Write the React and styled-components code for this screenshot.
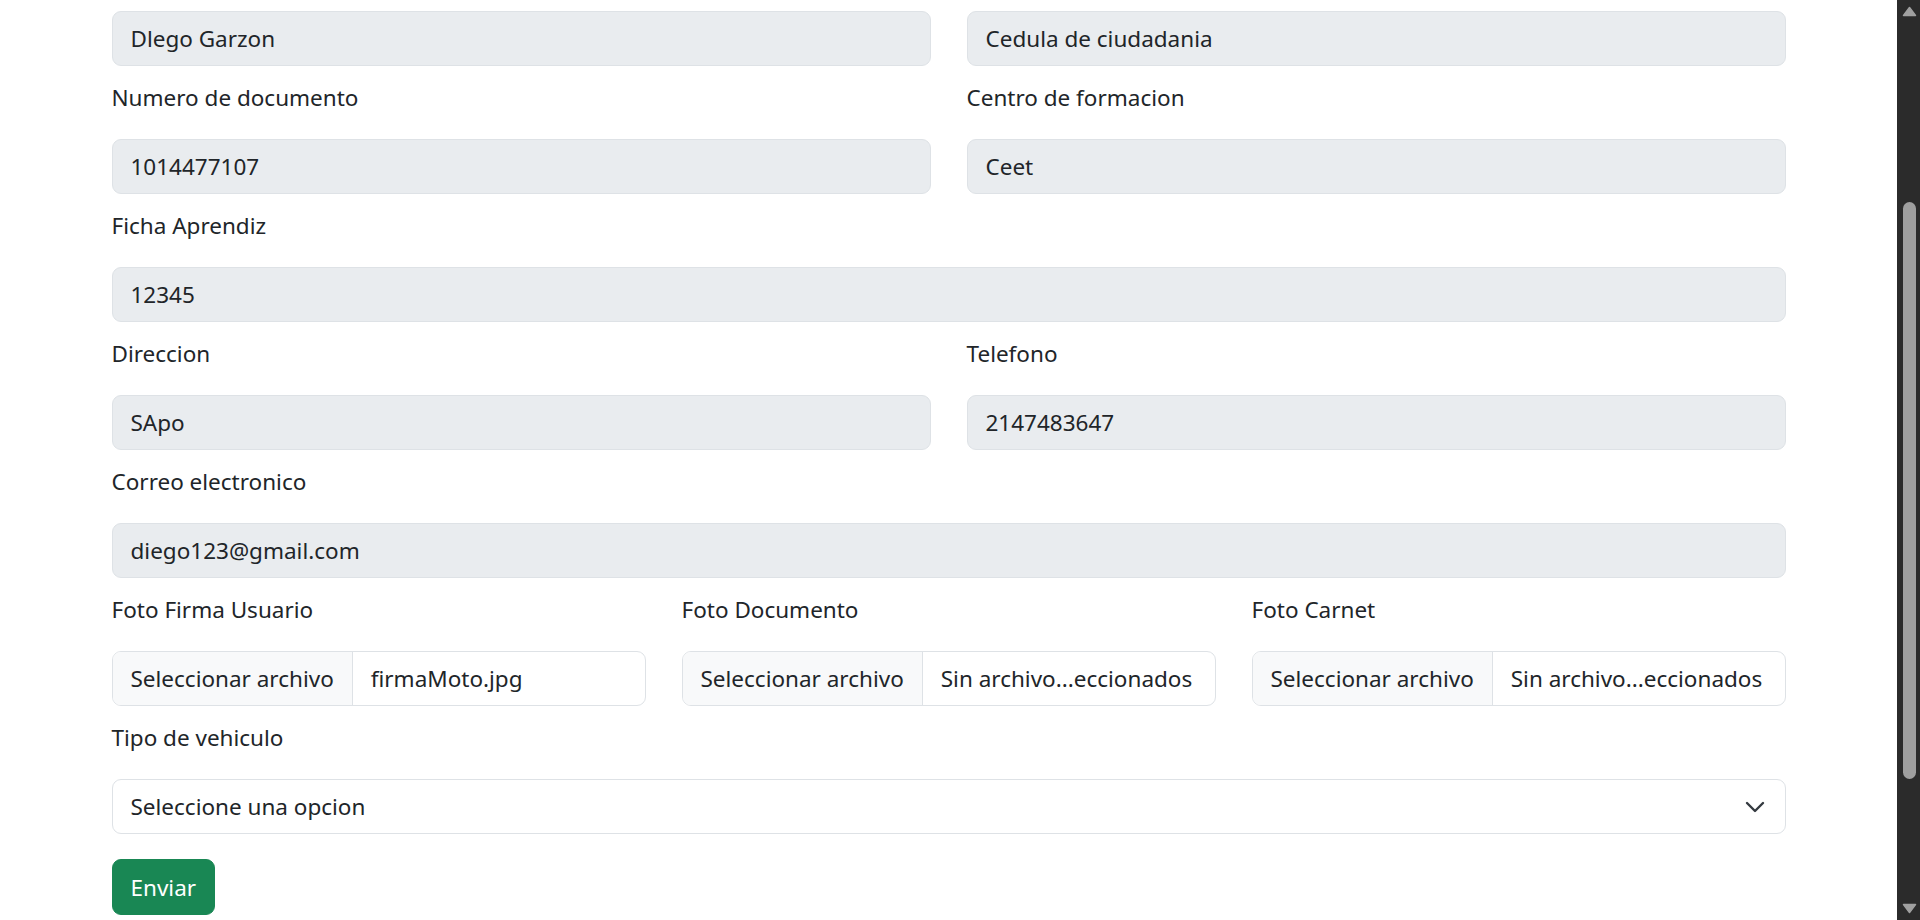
import React from "react";
import styled, { createGlobalStyle } from "styled-components";

const GlobalStyle = createGlobalStyle`
  html, body {
    margin: 0;
    padding: 0;
    height: 100%;
    overflow: hidden;
    background: #fff;
  }
  body {
    font-family: "Segoe UI", "Noto Sans", "Liberation Sans", sans-serif;
    font-size: 22.5px;
    color: #212529;
  }
  * { box-sizing: border-box; }
`;

const Page = styled.div`
  display: flex;
  height: 100vh;
`;

const Main = styled.main`
  flex: 1;
  overflow: hidden;
`;

const Container = styled.div`
  max-width: 1710px;
  margin: 0 auto;
  padding: 11px 18px 0;
`;

const Row = styled.div`
  display: grid;
  grid-template-columns: repeat(${(p) => p.$cols || 1}, 1fr);
  column-gap: 36px;
`;

const Group = styled.div`
  margin-bottom: ${(p) => p.$mb || 14}px;
`;

const Label = styled.label`
  display: block;
  line-height: 36px;
  margin-bottom: 23px;
`;

const Input = styled.div`
  height: 55px;
  display: flex;
  align-items: center;
  padding: 0 18px;
  border: 1px solid #dee2e6;
  border-radius: 9px;
  background: ${(p) => (p.$disabled ? "#e9ecef" : "#fff")};
  white-space: nowrap;
  overflow: hidden;
`;

const FileBox = styled.div`
  height: 55px;
  display: flex;
  border: 1px solid #dee2e6;
  border-radius: 9px;
  overflow: hidden;
  background: #fff;
`;

const FileButton = styled.span`
  display: flex;
  align-items: center;
  padding: 0 18px;
  background: #f8f9fa;
  border-right: 1px solid #dee2e6;
  white-space: nowrap;
`;

const FileName = styled.span`
  display: flex;
  align-items: center;
  padding: 0 18px;
  white-space: nowrap;
  overflow: hidden;
`;

const Select = styled(Input)`
  justify-content: space-between;
  padding-right: 20px;
`;

const Button = styled.button`
  height: 56px;
  padding: 0 18px;
  font: inherit;
  color: #fff;
  background: #198754;
  border: 1px solid #198754;
  border-radius: 9px;
`;

const Scrollbar = styled.aside`
  width: 23px;
  background: #2b2b2b;
  display: flex;
  flex-direction: column;
  align-items: center;
  padding: 6px 0;
`;

const Track = styled.div`
  flex: 1;
  width: 100%;
  display: flex;
  flex-direction: column;
  align-items: center;
  padding-top: ${(p) => p.$offset}px;
`;

const Thumb = styled.div`
  width: 13px;
  height: ${(p) => p.$size}px;
  border-radius: 7px;
  background: #9f9f9f;
  margin-left: 1px;
`;

const Arrow = ({ up }) => (
  <svg width="15" height="11" viewBox="0 0 15 11" style={{ marginLeft: 1 }}>
    <path
      d={up ? "M7.5 1.5 L13.5 9.5 L1.5 9.5 Z" : "M1.5 1.5 L13.5 1.5 L7.5 9.5 Z"}
      fill="#a0a0a0"
      stroke="#a0a0a0"
      strokeWidth="1.5"
      strokeLinejoin="round"
    />
  </svg>
);

const Chevron = () => (
  <svg width="20" height="14" viewBox="0 0 20 14">
    <path
      d="M2 3 L10 11 L18 3"
      fill="none"
      stroke="#343a40"
      strokeWidth="2.4"
      strokeLinecap="round"
      strokeLinejoin="round"
    />
  </svg>
);

function Field({ label, children, mb }) {
  return (
    <Group $mb={mb}>
      {label && <Label>{label}</Label>}
      {children}
    </Group>
  );
}

export default function App() {
  return (
    <Page>
      <GlobalStyle />
      <Main>
        <Container>
          <form onSubmit={(e) => e.preventDefault()}>
            <Row $cols={2}>
              <Field>
                <Input $disabled>Dlego Garzon</Input>
              </Field>
              <Field>
                <Input $disabled>Cedula de ciudadania</Input>
              </Field>
            </Row>
            <Row $cols={2}>
              <Field label="Numero de documento">
                <Input $disabled>1014477107</Input>
              </Field>
              <Field label="Centro de formacion">
                <Input $disabled>Ceet</Input>
              </Field>
            </Row>
            <Field label="Ficha Aprendiz">
              <Input $disabled>12345</Input>
            </Field>
            <Row $cols={2}>
              <Field label="Direccion">
                <Input $disabled>SApo</Input>
              </Field>
              <Field label="Telefono">
                <Input $disabled>2147483647</Input>
              </Field>
            </Row>
            <Field label="Correo electronico">
              <Input $disabled>diego123@gmail.com</Input>
            </Field>
            <Row $cols={3}>
              <Field label="Foto Firma Usuario">
                <FileBox>
                  <FileButton>Seleccionar archivo</FileButton>
                  <FileName>firmaMoto.jpg</FileName>
                </FileBox>
              </Field>
              <Field label="Foto Documento">
                <FileBox>
                  <FileButton>Seleccionar archivo</FileButton>
                  <FileName>Sin archivo...eccionados</FileName>
                </FileBox>
              </Field>
              <Field label="Foto Carnet">
                <FileBox>
                  <FileButton>Seleccionar archivo</FileButton>
                  <FileName>Sin archivo...eccionados</FileName>
                </FileBox>
              </Field>
            </Row>
            <Field label="Tipo de vehiculo" mb={25}>
              <Select>
                <span>Seleccione una opcion</span>
                <Chevron />
              </Select>
            </Field>
            <Button type="submit">Enviar</Button>
          </form>
        </Container>
      </Main>
      <Scrollbar>
        <Arrow up />
        <Track $offset={185}>
          <Thumb $size={577} />
        </Track>
        <Arrow />
      </Scrollbar>
    </Page>
  );
}
